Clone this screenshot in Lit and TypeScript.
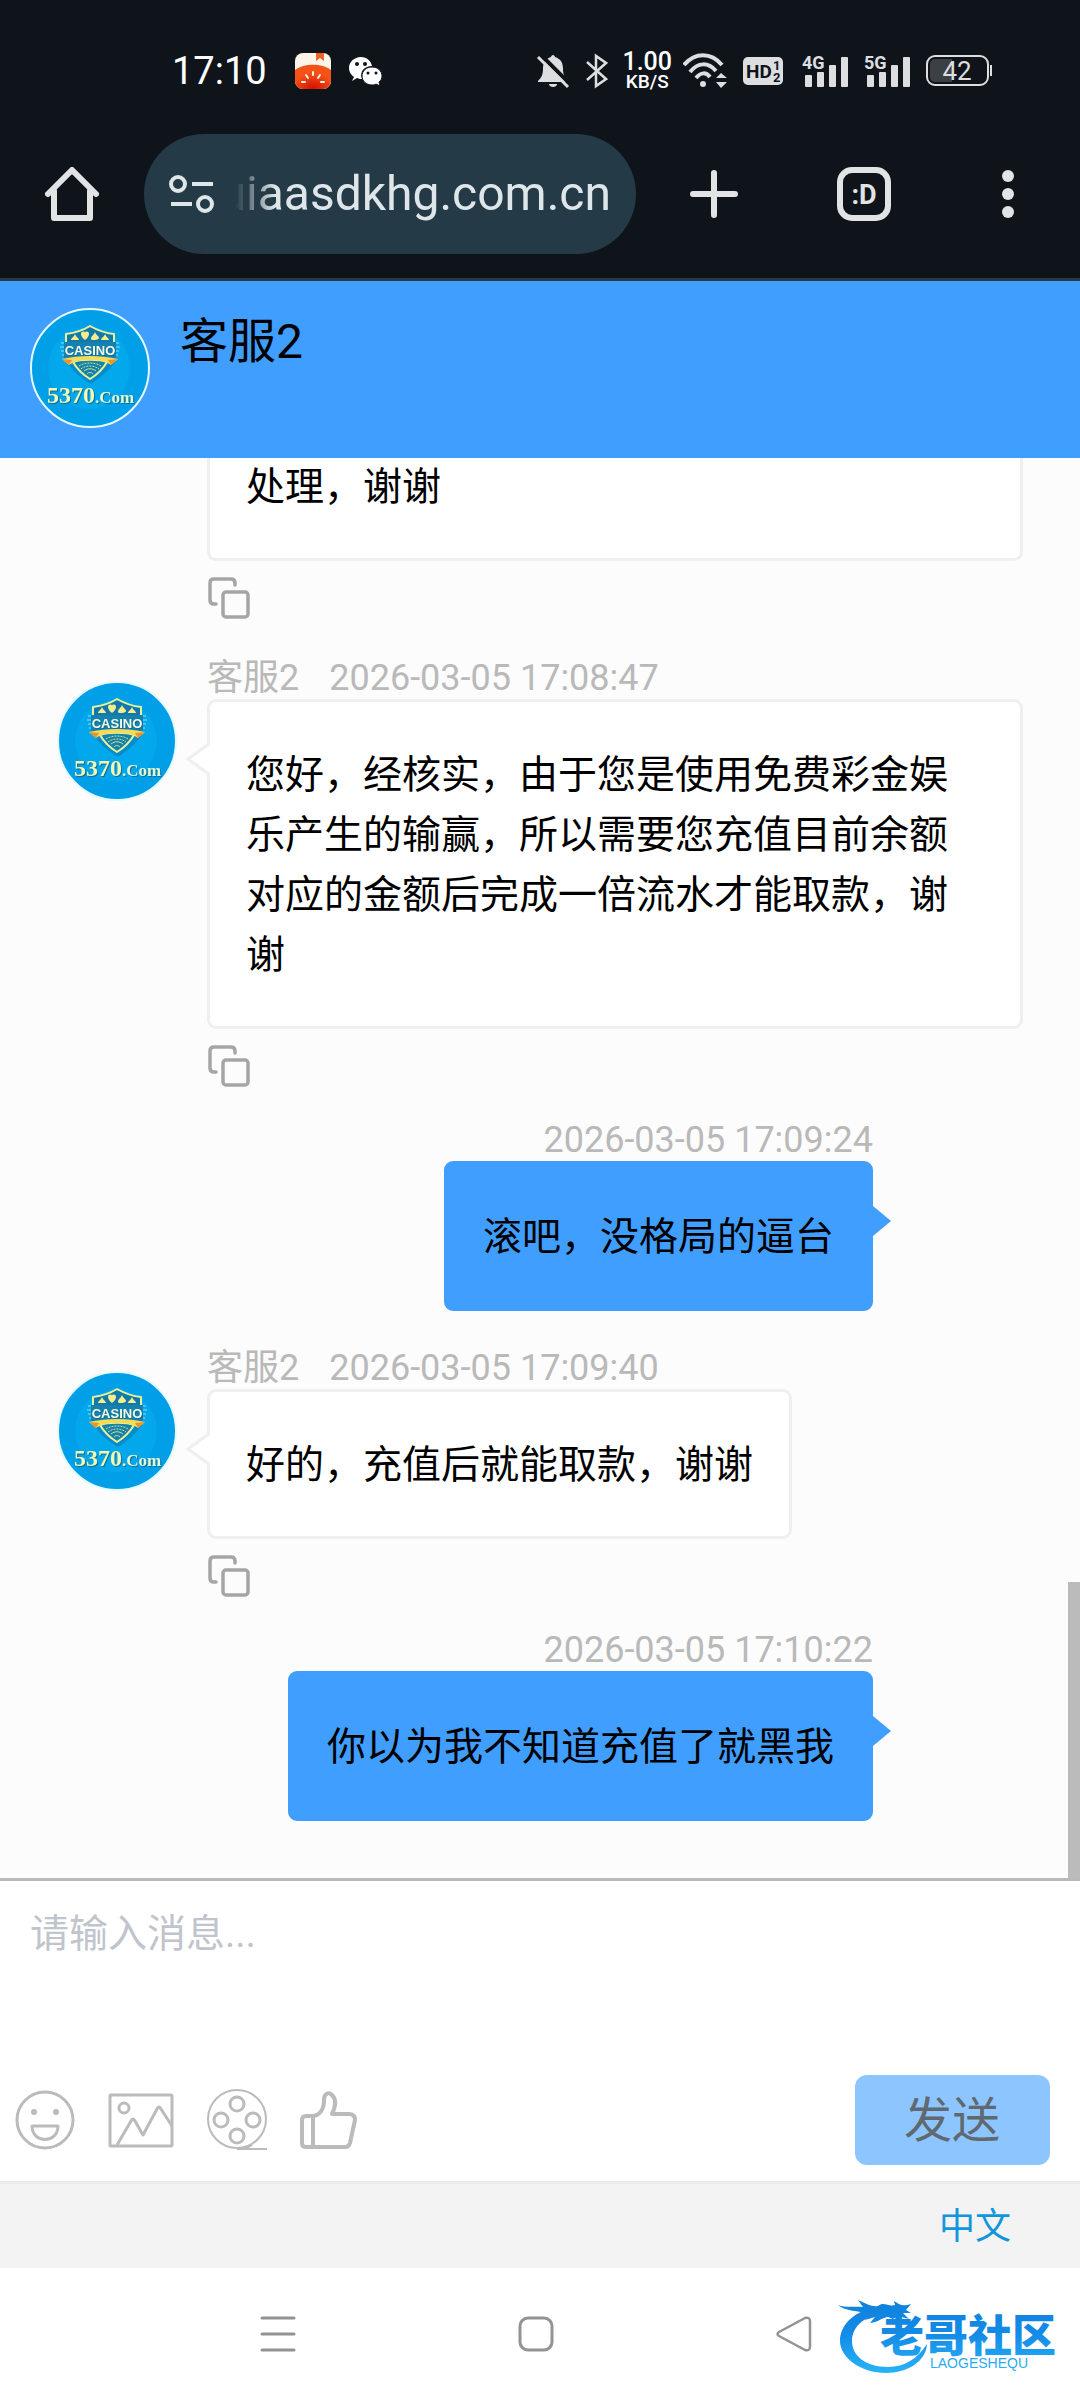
import { LitElement, html, css, nothing } from "lit";
import { customElement, property } from "lit/decorators.js";
import { classMap } from "lit/directives/class-map.js";

interface Message {
  side: "left" | "right";
  text: string;
  name?: string;
  time?: string;
  continued?: boolean;
}

const MESSAGES: Message[] = [
  { side: "left", text: "处理，谢谢", continued: true },
  {
    side: "left",
    name: "客服2",
    time: "2026-03-05 17:08:47",
    text: "您好，经核实，由于您是使用免费彩金娱乐产生的输赢，所以需要您充值目前余额对应的金额后完成一倍流水才能取款，谢谢",
  },
  { side: "right", time: "2026-03-05 17:09:24", text: "滚吧，没格局的逼台" },
  { side: "left", name: "客服2", time: "2026-03-05 17:09:40", text: "好的，充值后就能取款，谢谢" },
  { side: "right", time: "2026-03-05 17:10:22", text: "你以为我不知道充值了就黑我" },
];

const fontStack = css`
  :host {
    display: block;
    font-family: Roboto, "Noto Sans CJK SC", sans-serif;
  }
  svg {
    display: block;
    flex: none;
  }
  button {
    display: flex;
    align-items: center;
    justify-content: center;
    padding: 0;
    border: 0;
    background: none;
    color: inherit;
    font: inherit;
  }
`;

/* Round brand picture used in the header and beside agent messages. */
@customElement("brand-avatar")
export class BrandAvatar extends LitElement {
  static styles = [
    fontStack,
    css`
      .shaded {
        filter: drop-shadow(1px 1px 0 #0b6f9c);
      }
      .casino {
        font: 700 13px "Liberation Sans", sans-serif;
      }
      .digits {
        font: 700 24px "Liberation Serif", serif;
      }
      .com {
        font: 700 17px "Liberation Serif", serif;
      }
    `,
  ];

  render() {
    return html`
      <svg width="120" height="120" viewBox="0 0 120 120" role="img" aria-label="5370.Com">
        <circle cx="60" cy="60" r="59" fill="#019fe8" stroke="#e4faff" stroke-width="2" />
        <circle cx="59" cy="60" r="41" fill="#03a7ec" />
        <path d="M61 21C53 25 45 27 38 28L37 54C42 63 51 70 61 76C70 70 79 63 85 54L83 28C74 27 67 25 61 21Z" fill="#0872a5" opacity=".5" />
        <path d="M60 18C52 23 44 25 36 26V40H84V26C74 25 67 22 60 18Z" fill="#1279ad" stroke="#e8f29a" stroke-width="2" stroke-linejoin="round" />
        <g fill="#f6ee8a">
          <path d="M41 32c0-2 3-3 4-6c1 3 4 4 4 6z" />
          <path d="M51 26c0-3 4-3 4-1c0-2 4-2 4 1c0 3-4 6-4 6s-4-3-4-6z" />
          <path d="M65 24c1 3 4 4 4 6c0 2-8 3-8 1c0-3 3-4 4-7z" />
          <path d="M71 32c0-2 3-3 4-6c1 3 4 4 4 6z" />
        </g>
        <path d="M31 35h4M30 39h4M31 43h3M32 47h3M85 35h4M86 39h4M86 43h3M85 47h3" stroke="#8fdcf0" stroke-width="1" />
        <rect x="34" y="34" width="52" height="16" fill="#1680ae" />
        <path d="M43 54C50 51 70 51 77 54C73 61 68 66 60 71C52 66 47 61 43 54Z" fill="#1781ab" stroke="#e8f29a" stroke-width="2" />
        <path d="M32 51C50 47 70 47 88 51L81 57L76 54C65 51 55 51 44 54L39 57Z" fill="#f3dc5a" />
        <path d="M32 51l10 1l-3 5zM88 51l-10 1l3 5z" fill="#e9952c" />
        <g fill="none" stroke="#c9e58b" stroke-width="1">
          <path d="M49 58c6-4 16-4 22 0" stroke-dasharray="2 1" />
          <path d="M51 61c5-4 13-4 18 0" stroke-dasharray="2 1" />
          <path d="M54 63c4-3 8-3 12 0M57 66c2-2 4-2 6 0" />
        </g>
        <g class="shaded">
          <text class="casino" x="60" y="47" text-anchor="middle" fill="#f6fce6">CASINO</text>
          <text class="digits" x="17" y="95" fill="#f1f9b4">5370</text>
          <text class="com" x="65" y="95" fill="#e6f8cf">.Com</text>
        </g>
      </svg>
    `;
  }
}

/* System status line and the browser's address bar. */
@customElement("phone-top")
export class PhoneTop extends LitElement {
  static styles = [
    fontStack,
    css`
      .top {
        background: #0f141b;
        border-bottom: 3px solid #243a47;
        padding: 50px 0 24px;
      }
      .status {
        display: flex;
        align-items: center;
        justify-content: space-between;
        height: 42px;
        padding: 0 87px 0 172px;
        color: #fff;
      }
      .group {
        display: flex;
        align-items: center;
      }
      .apps {
        gap: 18px;
      }
      .time {
        font-size: 38px;
        line-height: 42px;
        margin-right: 10px;
      }
      .signals {
        gap: 16px;
      }
      .speed {
        display: flex;
        flex-direction: column;
        align-items: center;
        margin: 0 -5px 0 -2px;
        font-size: 25px;
        font-weight: 500;
        line-height: 22px;
      }
      .unit {
        font-size: 19px;
        line-height: 18px;
      }
      .signal {
        overflow: visible;
      }
      .net {
        font: 700 18px Roboto, sans-serif;
      }
      .small {
        font: 700 19px Roboto, sans-serif;
      }
      .tiny {
        font: 700 13px Roboto, sans-serif;
      }
      .level {
        font: 400 26px Roboto, sans-serif;
      }
      .tabface {
        font: 700 27px Roboto, sans-serif;
      }
      .bar {
        display: grid;
        grid-template-columns: 144px minmax(0, 1fr) 150px 150px 138px;
        align-items: center;
        margin-top: 42px;
        padding-right: 3px;
      }
      .address {
        display: flex;
        align-items: center;
        gap: 20px;
        height: 120px;
        margin-right: 3px;
        padding: 0 25px;
        border-radius: 60px;
        background: #243a46;
        box-sizing: border-box;
      }
      .url {
        display: flex;
        flex: 1;
        min-width: 0;
        justify-content: flex-end;
        overflow: hidden;
        color: #dfe6ea;
        font-size: 48px;
        line-height: 62px;
        white-space: nowrap;
        mask-image: linear-gradient(to right, transparent 0, #000 40px);
      }
    `,
  ];

  private signal(label: string) {
    return html`
      <svg class="signal" width="46" height="34" viewBox="0 0 46 34" fill="#dcdee0" role="img" aria-label=${label}>
        <text class="net" x="0" y="15">${label}</text>
        <rect x="3" y="21" width="7" height="12" rx="1" />
        <rect x="15" y="18" width="7" height="15" rx="1" />
        <rect x="27" y="11" width="7" height="22" rx="1" />
        <rect x="39" y="3" width="7" height="30" rx="1" />
      </svg>
    `;
  }

  render() {
    return html`
      <div class="top">
        <div class="status">
          <div class="group apps">
            <span class="time">17:10</span>
            <svg width="36" height="36" viewBox="0 0 36 36">
              <defs>
                <clipPath id="tile"><rect width="36" height="36" rx="8" /></clipPath>
                <radialGradient id="red" cx=".5" cy=".95" r=".6">
                  <stop offset="0" stop-color="#d51200" />
                  <stop offset="1" stop-color="#f5521a" />
                </radialGradient>
              </defs>
              <g clip-path="url(#tile)">
                <rect width="36" height="36" fill="#fdf6e8" />
                <path d="M21 0h8v8l-4-3l-4 3z" fill="#ee6424" />
                <path d="M0 17C9 10 27 10 36 17V36H0Z" fill="url(#red)" />
                <path d="M18 19v3M11 22l2 3M25 22l-2 3M7 29h3M26 29h3" stroke="#fff3dc" stroke-width="2" stroke-linecap="round" />
              </g>
            </svg>
            <svg width="34" height="30" viewBox="0 0 34 30" fill="#fff">
              <path d="M12 1C5 1 0 6 0 12c0 4 2 7 5 9l-2 4l5-3c2 1 4 1 5 1c-3-8 3-13 10-13C22 5 18 1 12 1Z" />
              <path d="M23 11c-6 0-10 4-10 9s4 9 10 9c1 0 3 0 4-1l4 2l-1-4c2-1 3-4 3-6c0-5-4-9-10-9Z" stroke="#0f141b" stroke-width="1" />
              <g fill="#0f141b">
                <circle cx="8" cy="8" r="2" />
                <circle cx="16" cy="8" r="2" />
                <circle cx="19" cy="17" r="1.5" />
                <circle cx="27" cy="17" r="1.5" />
              </g>
            </svg>
          </div>
          <div class="group signals">
            <svg width="34" height="36" viewBox="0 0 34 36">
              <path d="M17 2c1 0 2 1 2 2c6 2 8 6 8 12c0 6 2 9 5 12v1H2v-1c3-3 5-6 5-12C7 10 9 6 15 4c0-1 1-2 2-2Z" fill="#dcdee0" />
              <path d="M13 31h8c0 4-8 4-8 0Z" fill="#dcdee0" />
              <path d="M5 2L36 33" stroke="#0f141b" stroke-width="4" />
              <path d="M2 4L32 34" stroke="#dcdee0" stroke-width="3" />
            </svg>
            <svg width="22" height="36" viewBox="0 0 22 36" fill="none" stroke="#dcdee0" stroke-width="2.5">
              <path d="M1 9L20 26L10 33V3L20 10L1 27" />
            </svg>
            <div class="speed"><span>1.00</span><span class="unit">KB/S</span></div>
            <svg width="44" height="36" viewBox="0 0 44 36" fill="none" stroke="#dcdee0" stroke-width="4">
              <path d="M1 12C12-1 28-1 39 12" />
              <path d="M7 19C15 9 25 9 33 18" />
              <path d="M13 25C18 19 23 19 27 24" />
              <circle cx="20" cy="31" r="3" fill="#dcdee0" stroke="none" />
              <path d="M33 25l5-5l6 5zM33 29l5 6l6-6z" fill="#dcdee0" stroke="none" />
            </svg>
            <svg width="43" height="28" viewBox="0 0 43 28" fill="#0f141b">
              <rect width="40" height="28" rx="5" fill="#dcdee0" />
              <text class="small" x="3" y="21">HD</text>
              <text class="tiny" x="30" y="13">1</text>
              <text class="tiny" x="30" y="25">2</text>
            </svg>
            ${this.signal("4G")} ${this.signal("5G")}
            <svg width="67" height="32" viewBox="0 0 67 32">
              <rect x="1" y="1" width="61" height="29" rx="8" fill="none" stroke="#dcdee0" stroke-width="2" />
              <path d="M10 4H26V27H10C6 27 4 25 4 21V10C4 6 6 4 10 4Z" fill="#3c4044" />
              <rect x="64" y="10" width="2" height="11" fill="#dcdee0" />
              <text class="level" x="31" y="25" text-anchor="middle" fill="#dcdee0">42</text>
            </svg>
          </div>
        </div>
        <div class="bar">
          <button aria-label="主页">
            <svg width="54" height="54" viewBox="0 0 54 54" fill="none" stroke="#e1e3e5" stroke-width="6" stroke-linecap="round" stroke-linejoin="round">
              <path d="M3 27L27 3L51 27" />
              <path d="M9 24V51H45V24" />
            </svg>
          </button>
          <div class="address">
            <svg width="46" height="40" viewBox="0 0 46 40" fill="none" stroke="#dfe6ea" stroke-width="4">
              <circle cx="9" cy="10" r="7" />
              <path d="M23 10H44M2 30H23" />
              <circle cx="36" cy="30" r="7" />
            </svg>
            <span class="url">uiaasdkhg.com.cn</span>
          </div>
          <button aria-label="新标签页">
            <svg width="48" height="48" viewBox="0 0 48 48" stroke="#e1e3e5" stroke-width="6" stroke-linecap="round">
              <path d="M24 3V45M3 24H45" />
            </svg>
          </button>
          <button aria-label="标签页">
            <svg width="54" height="54" viewBox="0 0 54 54">
              <rect x="3" y="3" width="48" height="48" rx="12" fill="none" stroke="#e1e3e5" stroke-width="6" />
              <text class="tabface" x="27" y="37" text-anchor="middle" fill="#e1e3e5">:D</text>
            </svg>
          </button>
          <button aria-label="更多">
            <svg width="12" height="48" viewBox="0 0 12 48" fill="#e1e3e5">
              <circle cx="6" cy="6" r="6" />
              <circle cx="6" cy="24" r="6" />
              <circle cx="6" cy="42" r="6" />
            </svg>
          </button>
        </div>
      </div>
    `;
  }
}

@customElement("chat-message")
export class ChatMessage extends LitElement {
  @property({ attribute: false }) message!: Message;

  static styles = [
    fontStack,
    css`
      .row {
        display: flex;
        gap: 30px;
        padding: 0 57px;
      }
      .face {
        flex: none;
        width: 120px;
        margin-top: 27px;
      }
      .body {
        display: flex;
        flex: 1;
        flex-direction: column;
        align-items: flex-start;
        min-width: 0;
      }
      .meta {
        display: flex;
        gap: 30px;
        padding-top: 3px;
        color: #b9b9b9;
        font-size: 36px;
        line-height: 42px;
      }
      .bubble {
        position: relative;
        box-sizing: border-box;
        max-width: 100%;
        padding: 43px 36px 41px;
        border: 3px solid #efefef;
        border-radius: 9px;
        background: #fff;
        color: #000;
        font-size: 39px;
        line-height: 60px;
      }
      .tail {
        position: absolute;
        top: 38px;
        left: -26px;
      }
      .copy {
        margin: 16px 0 2px;
      }
      .right {
        padding-right: 207px;
      }
      .right .body {
        align-items: flex-end;
      }
      .right .meta {
        margin-top: -3px;
        padding-top: 0;
      }
      .right .bubble {
        border-color: #409eff;
        background: #409eff;
      }
      .right .tail {
        left: auto;
        right: -21px;
      }
      .continued .bubble {
        width: 100%;
        padding-top: 0;
        border-top: 0;
        border-radius: 0 0 9px 9px;
      }
    `,
  ];

  render() {
    const m = this.message;
    const left = m.side === "left";
    return html`
      <article class=${classMap({ row: true, right: !left, continued: !!m.continued })}>
        ${left
          ? html`<div class="face">${m.continued ? nothing : html`<brand-avatar></brand-avatar>`}</div>`
          : nothing}
        <div class="body">
          ${m.time
            ? html`<div class="meta">${m.name ? html`<span>${m.name}</span>` : nothing}<time>${m.time}</time></div>`
            : nothing}
          <div class="bubble">
            ${m.text}
            ${m.continued
              ? nothing
              : left
                ? html`<svg class="tail" width="27" height="38" viewBox="0 0 27 38">
                    <path d="M27 3L4 19L27 35Z" fill="#fff" />
                    <path d="M25 4L4 19L25 34" fill="none" stroke="#efefef" stroke-width="3" />
                  </svg>`
                : html`<svg class="tail" width="18" height="38" viewBox="0 0 18 38">
                    <path d="M0 4L18 19L0 34Z" fill="#409eff" />
                  </svg>`}
          </div>
          ${left
            ? html`<button class="copy" aria-label="复制">
                <svg width="44" height="42" viewBox="-1 0 44 42" fill="none" stroke="#a5a5a5" stroke-width="3.5" stroke-linecap="round" stroke-linejoin="round">
                  <path d="M8 27H6Q2 27 2 23V6Q2 2 6 2H23Q27 2 27 6V8" />
                  <rect x="15" y="15" width="25" height="25" rx="3" />
                </svg>
              </button>`
            : nothing}
        </div>
      </article>
    `;
  }
}

@customElement("chat-composer")
export class ChatComposer extends LitElement {
  static styles = [
    fontStack,
    css`
      .composer {
        border-top: 3px solid #b9b9b9;
        background: #fff;
      }
      .field {
        display: block;
        box-sizing: border-box;
        width: 100%;
        height: 194px;
        padding: 23px 30px;
        border: 0;
        outline: 0;
        resize: none;
        background: none;
        color: #000;
        font: 39px/60px Roboto, "Noto Sans CJK SC", sans-serif;
      }
      .field::placeholder {
        color: #c0c4cc;
        opacity: 1;
      }
      .actions {
        display: flex;
        align-items: center;
        justify-content: space-between;
        padding: 0 30px 16px 15px;
      }
      .tools {
        display: flex;
        align-items: center;
        gap: 33px;
      }
      .send {
        padding: 2px 50px 0 49px;
        border: 0;
        border-radius: 12px;
        background: #8cc5ff;
        color: #606870;
        font-size: 48px;
        line-height: 88px;
      }
      .language {
        display: flex;
        justify-content: flex-end;
        padding: 2px 69px 0 0;
        border-top: 3px solid #ebebeb;
        background: #f3f3f3;
      }
      .link {
        color: #1296db;
        font-size: 36px;
        line-height: 82px;
        text-decoration: none;
      }
    `,
  ];

  render() {
    return html`
      <form class="composer" @submit=${(e: Event) => e.preventDefault()}>
        <textarea class="field" aria-label="消息" placeholder="请输入消息..."></textarea>
        <div class="actions">
          <div class="tools">
            <button type="button" aria-label="表情">
              <svg width="60" height="60" viewBox="0 0 60 60" fill="none" stroke="#bbb" stroke-width="3">
                <circle cx="30" cy="30" r="28" />
                <path d="M17 36H43C43 54 17 54 17 36Z" stroke-linejoin="round" />
                <circle cx="19" cy="22" r="3" fill="#bbb" stroke="none" />
                <circle cx="41" cy="22" r="3" fill="#bbb" stroke="none" />
              </svg>
            </button>
            <button type="button" aria-label="图片">
              <svg width="66" height="60" viewBox="0 0 66 60" fill="none" stroke="#bbb" stroke-width="3" stroke-linejoin="round">
                <rect x="2" y="5" width="62" height="51" rx="1" />
                <circle cx="16" cy="18" r="5" />
                <path d="M9 55L23 31Q25 27 27 31L35 45L49 19Q51 15 53 19L64 36" />
              </svg>
            </button>
            <button type="button" aria-label="视频">
              <svg width="60" height="62" viewBox="0 0 60 62" fill="none" stroke="#bbb" stroke-width="2">
                <circle cx="30" cy="30" r="29" />
                <path d="M30 60H60M30 60Q40 60 45 56" />
                <g stroke-width="3">
                  <circle cx="30" cy="15" r="7" />
                  <circle cx="14" cy="31" r="7" />
                  <circle cx="46" cy="31" r="7" />
                  <circle cx="30" cy="47" r="7" />
                </g>
              </svg>
            </button>
            <button type="button" aria-label="点赞">
              <svg width="58" height="60" viewBox="0 0 58 60" fill="none" stroke="#bbb" stroke-width="4" stroke-linejoin="round">
                <path d="M13 26C20 25 24 19 24 10C24 3 29 2 32 5C37 10 35 18 32 24H49Q55 24 55 30L50 53Q49 57 45 57H6Q2 57 2 53V30Q2 26 6 26Z" />
                <path d="M13 26V57" />
              </svg>
            </button>
          </div>
          <button class="send" type="submit">发送</button>
        </div>
      </form>
      <footer class="language"><a class="link" href="#">中文</a></footer>
    `;
  }
}

/* Three-key navigation strip with the community mark over its right end. */
@customElement("phone-nav")
export class PhoneNav extends LitElement {
  static styles = [
    fontStack,
    css`
      .nav {
        position: relative;
        display: grid;
        grid-template-columns: repeat(3, 1fr);
        align-items: center;
        height: 132px;
        padding: 0 157px 0 149px;
        background: #fff;
      }
      .mark {
        position: absolute;
        right: 16px;
        top: 30px;
      }
      .name {
        font: 900 44px "Noto Sans CJK SC", sans-serif;
      }
      .latin {
        font: 14px "Liberation Sans", sans-serif;
      }
    `,
  ];

  render() {
    return html`
      <nav class="nav">
        <button aria-label="最近任务">
          <svg width="36" height="36" viewBox="0 0 36 36" stroke="#939393" stroke-width="3" stroke-linecap="round">
            <path d="M2 2H34M2 18H34M2 34H34" />
          </svg>
        </button>
        <button aria-label="主屏幕">
          <svg width="36" height="36" viewBox="0 0 36 36" fill="none" stroke="#939393" stroke-width="3">
            <rect x="2" y="2" width="32" height="32" rx="8" />
          </svg>
        </button>
        <button aria-label="返回">
          <svg width="36" height="36" viewBox="0 0 36 36" fill="none" stroke="#939393" stroke-width="2.5" stroke-linejoin="round">
            <path d="M3 16L29 2Q34 1 34 5V31Q34 35 29 34L3 20Q0 18 3 16Z" />
          </svg>
        </button>
        <svg class="mark" width="226" height="80" viewBox="0 0 226 80" role="img" aria-label="老哥社区">
          <defs>
            <linearGradient id="sea" x1="0" y1="0" x2="0" y2="80" gradientUnits="userSpaceOnUse">
              <stop offset="0" stop-color="#0f80dc" />
              <stop offset=".45" stop-color="#148be6" />
              <stop offset="1" stop-color="#2cb8fa" />
            </linearGradient>
          </defs>
          <g fill="url(#sea)">
            <path d="M34 10C14 15 2 28 2 43C2 59 22 75 48 75C70 75 88 63 89 46C80 60 67 69 50 69C28 69 14 58 14 43C14 30 25 19 41 16Z" />
            <path d="M0 7C8 10 16 8 25 9L20 2C29 6 34 9 40 8C46 3 50 9 57 7L56 3C61 6 64 9 73 6L68 12L73 15L65 15L71 21L60 18L55 21L50 19C43 20 41 24 32 25L37 19L27 22L31 16C20 12 8 14 0 7Z" />
            <text class="name" x="42" y="54">老哥社区</text>
            <text class="latin" x="92" y="70">LAOGESHEQU</text>
          </g>
        </svg>
      </nav>
    `;
  }
}

@customElement("app-root")
export class AppRoot extends LitElement {
  static styles = [
    fontStack,
    css`
      .screen {
        display: flex;
        flex-direction: column;
        height: 100vh;
        background: #fff;
      }
      .header {
        display: flex;
        align-items: flex-start;
        gap: 30px;
        padding: 27px 30px 30px;
        background: #409eff;
      }
      .title {
        margin: 0;
        color: #000;
        font-size: 48px;
        font-weight: 400;
        line-height: 68px;
      }
      .chat {
        position: relative;
        display: flex;
        flex: 1;
        flex-direction: column;
        justify-content: flex-end;
        gap: 33px;
        min-height: 0;
        padding-bottom: 57px;
        overflow: hidden;
        background: #fcfcfc;
      }
      .item {
        flex: none;
      }
      .thumb {
        position: absolute;
        right: 0;
        bottom: 0;
        width: 12px;
        height: 296px;
        background: #bbb;
      }
    `,
  ];

  render() {
    return html`
      <div class="screen">
        <phone-top></phone-top>
        <header class="header">
          <brand-avatar></brand-avatar>
          <h1 class="title">客服2</h1>
        </header>
        <main class="chat">
          ${MESSAGES.map((m) => html`<chat-message class="item" .message=${m}></chat-message>`)}
          <div class="thumb"></div>
        </main>
        <chat-composer></chat-composer>
        <phone-nav></phone-nav>
      </div>
    `;
  }
}
